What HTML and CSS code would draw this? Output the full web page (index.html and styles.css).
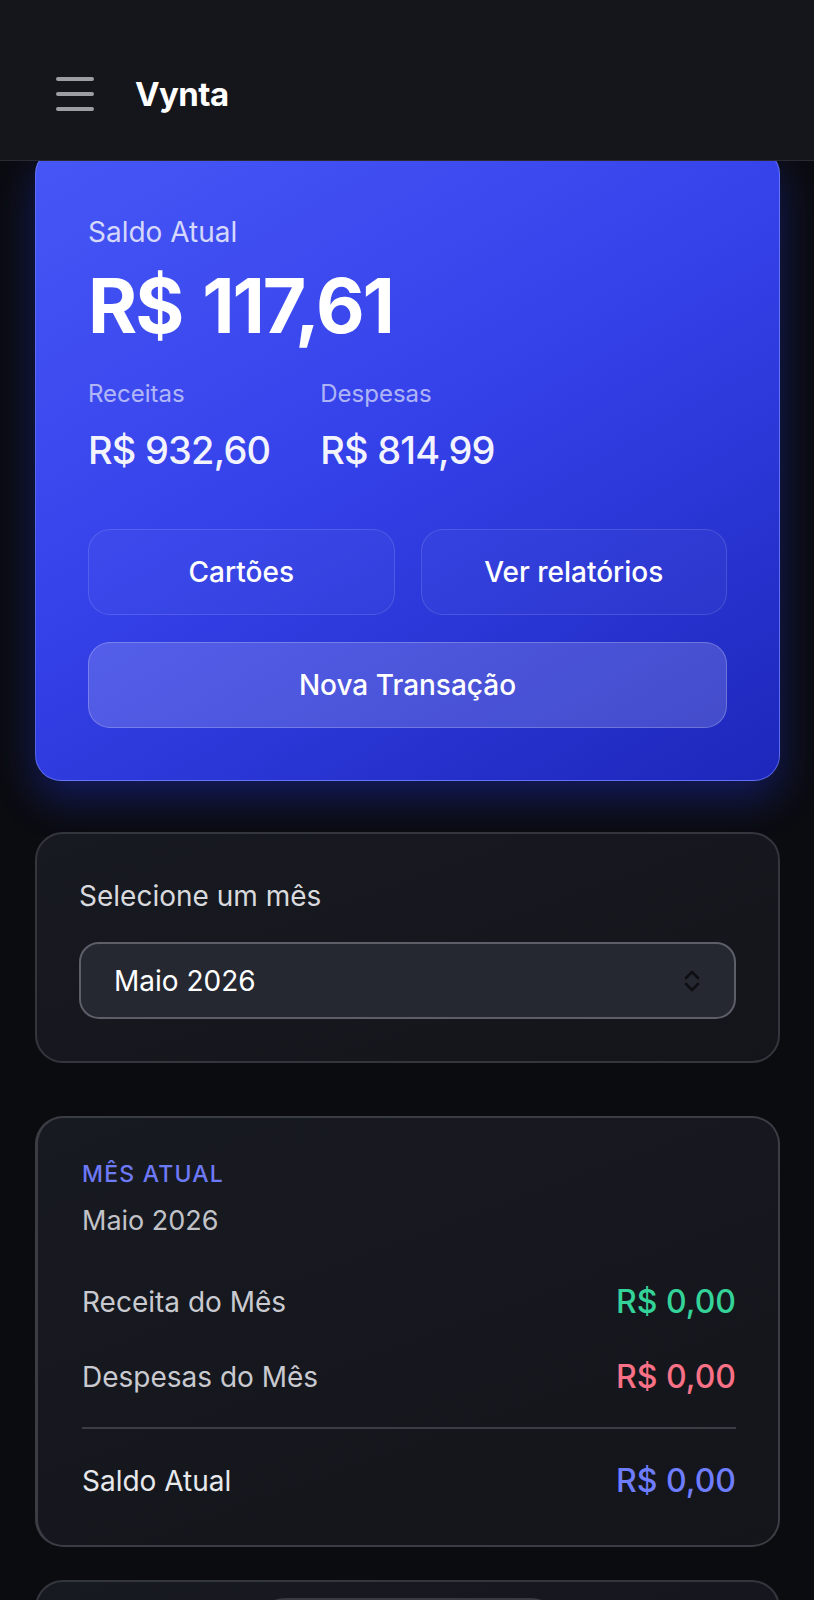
FILE: index.html
```html
<!DOCTYPE html>
<html lang="pt-BR">
<head>
  <meta charset="UTF-8" />
  <meta name="viewport" content="width=device-width, initial-scale=1.0" />
  <title>Vynta</title>
  <link rel="stylesheet" href="styles.css">
</head>
<body>
  <header class="topbar">
    <button class="menu-btn" aria-label="Menu">
      <span></span>
      <span></span>
      <span></span>
    </button>
    <h1 class="brand">Vynta</h1>
  </header>

  <main class="content">
    <section class="balance-card">
      <p class="balance-label">Saldo Atual</p>
      <p class="balance-value">R$ 117,61</p>
      <div class="balance-split">
        <div>
          <p class="split-label">Receitas</p>
          <p class="split-value">R$ 932,60</p>
        </div>
        <div>
          <p class="split-label">Despesas</p>
          <p class="split-value">R$ 814,99</p>
        </div>
      </div>
      <div class="actions">
        <button class="action">Cartões</button>
        <button class="action">Ver relatórios</button>
        <button class="action primary">Nova Transação</button>
      </div>
    </section>

    <section class="panel month-picker">
      <p class="picker-label">Selecione um mês</p>
      <div class="select">
        <span>Maio 2026</span>
        <svg width="18" height="24" viewBox="0 0 18 24" fill="none" stroke="#0e0f13" stroke-width="2.6" stroke-linecap="round" stroke-linejoin="round">
          <path d="M3 9l6-6 6 6" />
          <path d="M3 15l6 6 6-6" />
        </svg>
      </div>
    </section>

    <section class="panel summary">
      <p class="eyebrow">MÊS ATUAL</p>
      <p class="summary-month">Maio 2026</p>
      <div class="row">
        <span>Receita do Mês</span>
        <span class="amount income">R$ 0,00</span>
      </div>
      <div class="row">
        <span>Despesas do Mês</span>
        <span class="amount expense">R$ 0,00</span>
      </div>
      <hr class="divider" />
      <div class="row total">
        <span>Saldo Atual</span>
        <span class="amount balance">R$ 0,00</span>
      </div>
    </section>

    <section class="panel next">
      <div class="pill"></div>
    </section>
  </main>
</body>
</html>
```

FILE: styles.css
```css
* {
  box-sizing: border-box;
}
body {
  margin: 0;
  background: #0b0c10;
  color: #fff;
  font-family: Inter, "Noto Sans", sans-serif;
  height: 1600px;
  overflow: hidden;
}
p {
  margin: 0;
}
button {
  font-family: inherit;
  cursor: pointer;
}

/* header */
.topbar {
  position: fixed;
  top: 0;
  left: 0;
  right: 0;
  z-index: 10;
  height: 161px;
  padding: 28px 0 0 56px;
  display: flex;
  align-items: center;
  gap: 41px;
  background: #15161b;
  border-bottom: 1px solid #2a2b32;
}
.menu-btn {
  width: 38px;
  padding: 0;
  background: none;
  border: none;
  display: flex;
  flex-direction: column;
  gap: 11px;
}
.menu-btn span {
  display: block;
  height: 4px;
  border-radius: 2px;
  background: #9d9ea4;
}
.brand {
  margin: 0;
  font-size: 33px;
  font-weight: 700;
  letter-spacing: -0.6px;
}

.content {
  padding: 148px 34px 0 35px;
  display: flex;
  flex-direction: column;
}

/* balance card */
.balance-card {
  padding: 66px 52px 52px;
  border-radius: 26px;
  border: 1px solid rgba(130, 145, 255, 0.55);
  background: linear-gradient(150deg, #4757f6 0%, #3542ea 45%, #1d27bb 100%);
  box-shadow: 0 18px 40px rgba(38, 58, 255, 0.32);
}
.balance-label {
  font-size: 28px;
  line-height: 34px;
  color: rgba(255, 255, 255, 0.78);
}
.balance-value {
  margin-top: 19px;
  font-size: 75px;
  line-height: 1;
  font-weight: 700;
  letter-spacing: -2px;
  word-spacing: 4px;
}
.balance-split {
  margin-top: 36px;
  display: flex;
  gap: 50px;
}
.split-label {
  font-size: 24px;
  line-height: 30px;
  color: rgba(255, 255, 255, 0.62);
}
.split-value {
  margin-top: 17px;
  font-size: 38px;
  line-height: 48px;
  font-weight: 500;
  letter-spacing: -0.8px;
  color: rgba(255, 255, 255, 0.94);
}
.actions {
  margin-top: 55px;
  display: grid;
  grid-template-columns: 1fr 1fr;
  gap: 27px 26px;
}
.action {
  height: 86px;
  border-radius: 22px;
  border: 1px solid rgba(255, 255, 255, 0.13);
  background: rgba(255, 255, 255, 0.03);
  color: #fff;
  font-size: 28px;
  font-weight: 500;
}
.action.primary {
  grid-column: span 2;
  border-color: rgba(255, 255, 255, 0.22);
  background: rgba(255, 255, 255, 0.16);
}

/* dark panels */
.panel {
  border-radius: 28px;
  border: 2px solid #34363e;
  background: linear-gradient(160deg, #181a21 0%, #13151b 100%);
}
.month-picker {
  margin-top: 51px;
  padding: 45px 42px 42px;
}
.picker-label {
  font-size: 28px;
  line-height: 34px;
  color: #d9dade;
}
.select {
  margin-top: 29px;
  height: 77px;
  padding: 0 33px;
  display: flex;
  align-items: center;
  justify-content: space-between;
  border-radius: 20px;
  border: 2px solid #5c5e68;
  background: #252731;
  font-size: 28px;
  color: #fff;
}

.summary {
  margin-top: 53px;
  padding: 42px 42px 47px 44px;
  border-left-width: 3px;
  border-color: #3b3d45;
}
.eyebrow {
  font-size: 23px;
  line-height: 28px;
  font-weight: 500;
  letter-spacing: 1.2px;
  color: #6d79f6;
}
.summary-month {
  margin-top: 16px;
  font-size: 27px;
  line-height: 34px;
  color: #c2c3c9;
}
.row {
  display: flex;
  justify-content: space-between;
  align-items: center;
  margin-top: 47px;
  font-size: 28px;
  line-height: 34px;
  color: #c9cad0;
}
.row + .row {
  margin-top: 41px;
}
.row.total {
  margin-top: 0;
  color: #e8e9ed;
}
.amount {
  font-weight: 500;
  font-size: 32px;
}
.income {
  color: #34d399;
}
.expense {
  color: #f87186;
}
.balance {
  color: #6e7dfd;
}
.divider {
  margin: 33px 0 35px;
  border: none;
  height: 2px;
  background: #3b3d45;
}

.next {
  margin-top: 33px;
  height: 200px;
  padding-top: 16px;
  display: flex;
  justify-content: center;
}
.pill {
  width: 314px;
  height: 70px;
  border-radius: 35px;
  border: 2px solid #3a3c44;
  background: #1d1f26;
}
```
